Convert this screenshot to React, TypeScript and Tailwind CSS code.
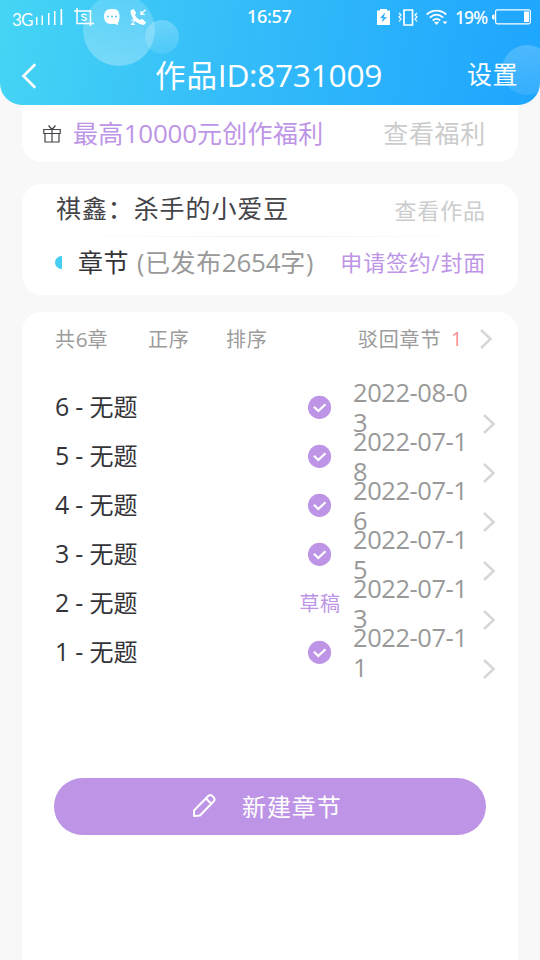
import React from 'react';

const chapters = [
  { no: 6, date: '2022-08-03', draft: false },
  { no: 5, date: '2022-07-18', draft: false },
  { no: 4, date: '2022-07-16', draft: false },
  { no: 3, date: '2022-07-15', draft: false },
  { no: 2, date: '2022-07-13', draft: true },
  { no: 1, date: '2022-07-11', draft: false },
];

// Latin letters and digits run slightly taller and tighter than the Chinese text around them.
function Num({ children }: { children: React.ReactNode }) {
  return <span className="text-[1.040em] leading-none tracking-[-0.009em]">{children}</span>;
}

function Chevron() {
  return (
    <svg width="14" height="22" viewBox="0 0 14 22" fill="none" stroke="#d6d6d6" strokeWidth="2.4" className="shrink-0">
      <path d="M2 2 L11.6 11 L2 20" />
    </svg>
  );
}

function CheckBadge() {
  return (
    <svg width="24" height="24" viewBox="0 0 24 24" fill="none">
      <circle cx="11.5" cy="12.4" r="11.6" fill="#be95e6" />
      <path d="M5.900 11.800 L10.300 16 L17.500 9.200" stroke="#fff" strokeWidth="2.200" />
    </svg>
  );
}

function StatusBar() {
  return (
    <div className="relative flex h-[34px] items-start text-white">
      <span className="ml-[12px] mt-[11px] w-[22px] font-[Lato] text-[17px] leading-[17px] tracking-[-0.8px]">3G</span>
      <svg className="ml-[2px] mt-[9px]" width="27" height="17" viewBox="0 0 27 17" fill="#fff">
        <path d="M0 8h1.500v8H0zM5.500 6.500h1.500v9.500H5.500zM12 4h1.500v12H12zM18 2h1.500v14H18zM24.500 0h1.700v16h-1.700z" />
      </svg>
      <svg className="ml-[11px] mt-[8px]" width="20" height="19" viewBox="0 0 20 19" fill="none" stroke="#fff" strokeWidth="1.500">
        <path d="M0 3h16.500v15M3 0v15.500h17" />
        <path d="M12.300 7.200c-.5-1.200-4.600-1.500-4.600.5 0 2.100 4.700 1 4.700 3.200 0 2-4.500 1.700-5 .2" strokeWidth="1.300" />
      </svg>
      <svg className="ml-[10px] mt-[9px]" width="17" height="17" viewBox="0 0 17 17">
        <path d="M7 0h2.500c4 0 6 3 6 7.500 0 3-.5 5-1.500 6.200l.2 2.500-3-1.200H7c-4.500 0-7-3-7-7.500S2.500 0 7 0z" fill="#fff" />
        <circle cx="4" cy="7.500" r="1" fill="#4fc9f5" /><circle cx="8" cy="7.500" r="1" fill="#4fc9f5" /><circle cx="12" cy="7.500" r="1" fill="#4fc9f5" />
      </svg>
      <svg className="ml-[9px] mt-[8px]" width="18" height="18" viewBox="0 0 18 18">
        <path d="M.5 2.500 L3.500 1 L6.200 4.800 L5 7 C6.300 9.500 7.500 10.800 10 12 L12 10.800 L16.200 14.500 L14 17 C7 16.500 .5 10 .5 2.500z" fill="#fff" />
        <path d="M10.500 6.500 L15.500 1.800M11 3v3.400h3.500" stroke="#fff" strokeWidth="1.200" fill="none" />
        <path d="M1.500 12.800c.5-1.500 3.200-1.200 3 .4-.1.900-2.500 2-2.900 3.200h3.300" stroke="#fff" strokeWidth="1.100" fill="none" />
      </svg>
      <span className="absolute left-[247px] top-[6px] font-['Noto_Sans'] text-[18px] font-medium leading-[20px] tracking-[-0.3px]">16:57</span>
      <div className="ml-auto mr-[9px] mt-[8px] flex h-[18px] items-center">
        <svg width="13" height="16" viewBox="0 0 13 16">
          <path d="M0 1.500h3V0h7v1.500h3V16H0z" fill="#fff" />
          <path d="M8 3.500L3 9h2.900l-1 4.200L10 8H7z" fill="#38b4fc" />
        </svg>
        <svg className="ml-[8px]" width="20" height="17" viewBox="0 0 20 17" fill="none" stroke="#fff" strokeWidth="1.500">
          <path d="M6 1h8.500v15H6z" strokeWidth="1.700" />
          <path d="M1 4l2 2-2 2 2 2-2 2.500M19 4l-2 2 2 2-2 2 2 2.500" strokeWidth="1.200" />
        </svg>
        <svg className="ml-[8px] mt-[1px]" width="22" height="17" viewBox="0 0 22 17" fill="none" stroke="#fff">
          <path d="M.7 5.500C6.500.2 14.500.2 20.300 5.500M3.800 8.600C8 4.800 13 4.800 17.200 8.600M6.700 11.500C9.200 9.300 11.800 9.300 14.300 11.500" strokeWidth="1.700" />
          <path d="M7.700 12.800h5.600L10.500 16z" fill="#fff" stroke="none" />
          <path d="M16.500 12.500h5L19 15.200z" fill="#fff" stroke="none" />
        </svg>
        <span className="ml-[7px] w-[34px] whitespace-nowrap font-['Noto_Sans'] text-[17.500px] font-medium leading-[18px] tracking-[-0.9px]">19%</span>
        <svg className="ml-[3px]" width="39" height="16" viewBox="0 0 39 16" fill="none">
          <path d="M2.500 5v6L0 9.500v-3z" fill="#fff" />
          <rect x="3.600" y=".8" width="34.800" height="14" rx="1.800" stroke="#fff" strokeWidth="1.200" />
          <path d="M32 2.500h5v10.500h-5z" fill="#fff" />
        </svg>
      </div>
    </div>
  );
}

function Header() {
  return (
    <header className="relative h-[105px] shrink-0 overflow-hidden rounded-b-[22px] bg-[linear-gradient(100deg,#45d5f4_0%,#35bdf9_42%,#1ea5fe_100%)]">
      <div className="absolute left-[83px] top-[-6px] size-[72px] rounded-full bg-linear-to-b from-white/15 to-white/30" />
      <div className="absolute left-[145px] top-[20px] size-[34px] rounded-full bg-linear-to-b from-white/25 to-white/10" />
      <div className="absolute left-[502px] top-[45px] size-[50px] rounded-full bg-linear-to-b from-white/20 to-white/10" />
      <StatusBar />
      <div className="relative flex h-[71px] items-start text-white">
        <svg className="ml-[21px] mt-[29px]" width="17" height="26" viewBox="0 0 17 26" fill="none" stroke="#fff" strokeWidth="2.600" strokeLinecap="round">
          <path d="M13.500 2 L2.500 13 L13.500 24" />
        </svg>
        <h1 className="ml-[117px] mt-[21px] w-[250px] whitespace-nowrap text-[30.500px] leading-[40px] tracking-[0.900px]">作品<Num>ID:8731009</Num></h1>
        <span className="ml-[62px] mt-[25px] whitespace-nowrap text-[25px] leading-[30px] tracking-[0.5px]">设置</span>
      </div>
    </header>
  );
}

function ChapterRow({ no, date, draft }: { no: number; date: string; draft: boolean }) {
  return (
    <li className="flex h-[49px] items-center pl-[33px]">
      <span className="w-[241px] whitespace-nowrap text-[24px] leading-[30px] tracking-[0.200px] text-[#333338]"><Num>{no} - </Num>无题</span>
      <span className="flex w-[47px] items-center justify-center text-[20px] leading-[24px] tracking-[0.5px] text-[#be95e6]">
        {draft ? <span className="ml-px mt-[3px]">草稿</span> : <CheckBadge />}
      </span>
      <span className="ml-[10px] w-[119px] whitespace-nowrap text-[25.500px] leading-[30px] tracking-[-0.450px] text-[#999]">
        {date.slice(0, 9)}
        <br />
        {date.slice(9)}
      </span>
      <span className="ml-[10px] mt-[34px]"><Chevron /></span>
    </li>
  );
}

export default function App() {
  return (
    <div className="flex h-[960px] w-[540px] flex-col overflow-hidden bg-[#f8f8f8] font-['Open_Sans','Noto_Sans_CJK_SC',sans-serif]">
      <Header />
      <section className="mx-[22px] flex h-[57px] shrink-0 items-center rounded-b-[20px] bg-white pl-[22px] pr-[32px]">
        <svg className="-ml-px" width="18" height="19" viewBox="0 0 18 19" fill="none" stroke="#444449" strokeWidth="1.200">
          <path d="M.8 5.500h16.400v4H.8zM2 9.500v8.500h14V9.500M9 5.500V18M9 5.500L5.500 1.500M9 5.500l3.500-4" />
        </svg>
        <span className="mb-px ml-[12px] whitespace-nowrap text-[25px] leading-[30px] tracking-[0.350px] text-[#be95e6]">最高<Num>10000</Num>元创作福利</span>
        <span className="mb-px ml-auto whitespace-nowrap text-[25px] leading-[30px] tracking-[0.700px] text-[#cbcccc]">查看福利</span>
      </section>
      <section className="mx-[22px] mt-[22px] h-[111px] shrink-0 rounded-[20px] bg-white pl-[34px] pr-[32px]">
        <div className="flex h-[52px] items-center justify-between">
          <span className="mb-[4px] whitespace-nowrap text-[25px] leading-[30px] tracking-[0.900px] text-[#444449]">祺鑫：杀手的小爱豆</span>
          <span className="mb-px whitespace-nowrap text-[22px] leading-[30px] tracking-[0.900px] text-[#cbcccc]">查看作品</span>
        </div>
        <div className="h-px bg-linear-to-r from-transparent via-[#f1f1f1] to-transparent" />
        <div className="flex h-[51px] items-center">
          <span className="-ml-px h-[13px] w-[7px] rounded-l-full bg-[#45cdf2]" />
          <span className="-mt-px ml-[16px] whitespace-nowrap text-[25px] leading-[30px] tracking-[0.500px] text-[#333338]">章节</span>
          <span className="-mt-px ml-[8px] whitespace-nowrap text-[25px] leading-[30px] tracking-[0.600px] text-[#999]">(已发布<Num>2654</Num>字)</span>
          <span className="-mt-px ml-auto whitespace-nowrap text-[22px] leading-[30px] tracking-[0.800px] text-[#be95e6]">申请签约/封面</span>
        </div>
      </section>
      <main className="mx-[22px] mt-[17px] flex flex-1 flex-col rounded-t-[20px] bg-white">
        <div className="flex h-[54px] items-center whitespace-nowrap pl-[33px] text-[20px] leading-[26px] tracking-[0.800px] text-[#9b9b9b]">
          <span className="mt-px w-[93px]">共<Num>6</Num>章</span>
          <span className="mt-px w-[78px]">正序</span>
          <span className="mt-px w-[132px]">排序</span>
          <span className="mt-px w-[93px]">驳回章节</span>
          <span className="w-[28px] text-[#fa8f8f]">1</span>
          <Chevron />
        </div>
        <ul className="mt-[16px]">
          {chapters.map((c) => (
            <ChapterRow key={c.no} {...c} />
          ))}
        </ul>
        <button className="mx-[32px] mt-[102px] flex h-[57px] items-center rounded-full bg-[#be95e6] text-white">
          <svg className="-mt-[2px] ml-[138px]" width="25" height="25" viewBox="0 0 25 25" fill="none" stroke="#fff" strokeWidth="2" strokeLinejoin="round">
            <path d="M2 17.500L16.500 2.800Q18.300 1.200 20 2.800L22 4.800Q23.300 6.500 21.800 8.200L8 22.500L2 23zM14 5.500L19.500 11" />
          </svg>
          <span className="ml-[25px] whitespace-nowrap text-[24px] leading-[30px] tracking-[0.900px]">新建章节</span>
        </button>
      </main>
    </div>
  );
}
